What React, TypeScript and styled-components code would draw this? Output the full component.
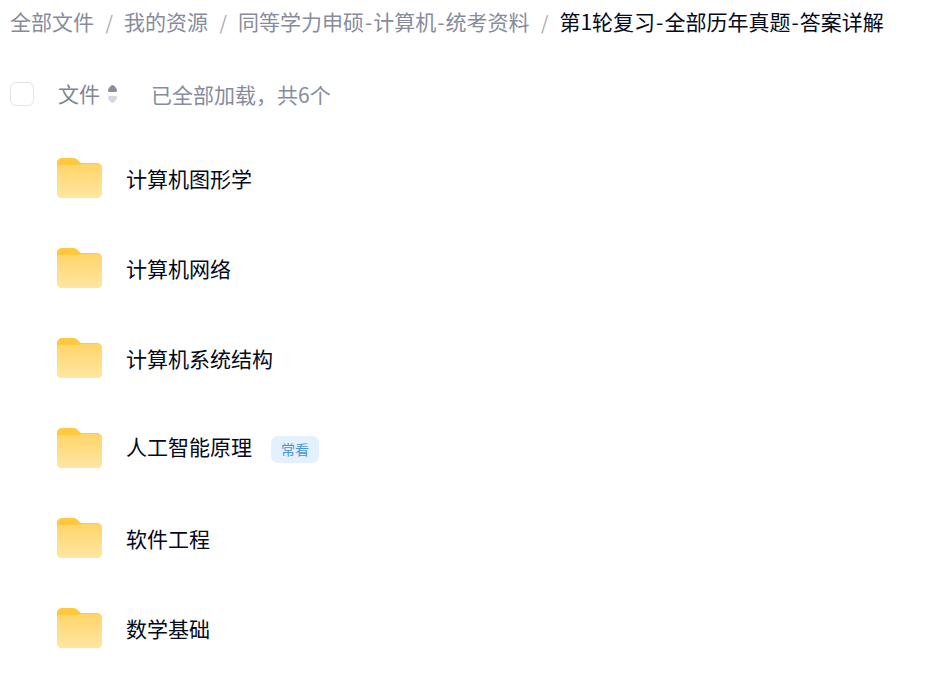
import React from 'react';
import styled, { createGlobalStyle } from 'styled-components';

const GlobalStyle = createGlobalStyle`
  html, body {
    margin: 0;
    padding: 0;
    background: #fff;
    overflow: hidden;
  }
  body {
    font-family: "Noto Sans CJK SC", "Noto Sans", sans-serif;
  }
`;

const Page = styled.div`
  width: 939px;
  height: 673px;
  padding-left: 10px;
  box-sizing: border-box;
  overflow: hidden;
`;

const Breadcrumb = styled.nav`
  display: flex;
  align-items: center;
  height: 42px;
  font-size: 21px;
  white-space: nowrap;
`;

const Crumb = styled.span<{ $current?: boolean }>`
  color: ${(p) => (p.$current ? '#03081a' : '#878c9c')};
`;

// the hyphen sits wider in the reference font
const Dash = styled.span`
  margin: 0 1px;
`;

const Separator = styled.span`
  color: #a5a9b5;
  font-size: 19px;
  margin: 0 11px 0 11.500px;
`;

const HeaderRow = styled.div`
  display: flex;
  align-items: center;
  height: 48px;
  margin-top: 28px;
`;

const Checkbox = styled.div`
  width: 22px;
  height: 22px;
  border: 1px solid #e2e3e8;
  border-radius: 6px;
  background: #fff;
`;

const HeaderLabel = styled.span`
  margin-left: 24px;
  padding-bottom: 2px;
  font-size: 21px;
  color: #818696;
`;

const SortIcon = styled.svg`
  margin-left: 8px;
  width: 9px;
  height: 18px;
`;

const Summary = styled.span`
  margin-left: 34px;
  font-size: 21px;
  color: #878c9c;
`;

const List = styled.ul`
  list-style: none;
  margin: 15px 0 0;
  padding: 0 0 0 47px;
`;

const Row = styled.li`
  display: flex;
  align-items: center;
  height: 90px;
`;

const FolderIcon = styled.svg`
  width: 45px;
  height: 40px;
  flex: none;
`;

const Name = styled.span<{ $tagged?: boolean }>`
  margin-left: 24px;
  padding-bottom: ${(p) => (p.$tagged ? '4px' : '1px')};
  font-size: 21px;
  color: #03081a;
  white-space: nowrap;
`;

const Badge = styled.span`
  margin: 2px 0 0 19px;
  padding-bottom: 1px;
  box-sizing: border-box;
  width: 48px;
  height: 27px;
  border-radius: 7px;
  background: #e3f0fd;
  color: #4a94d0;
  font-size: 14px;
  display: flex;
  align-items: center;
  justify-content: center;
`;

const Folder: React.FC<{ id: string }> = ({ id }) => (
  <FolderIcon viewBox="0 0 45 40">
    <defs>
      <linearGradient id={id} x1="0" y1="0" x2="0" y2="1">
        <stop offset="0" stopColor="#ffd569" />
        <stop offset="1" stopColor="#ffe6a2" />
      </linearGradient>
    </defs>
    <path
      d="M5 0h11.500c1.800 0 3 .7 4.100 1.900L24 5h16c2.800 0 5 2.200 5 5v6H0V5c0-2.800 2.200-5 5-5z"
      fill="#ffc83f"
    />
    <path
      d="M3 7h18c1.500 0 2.500-.3 3.500-1H41c2.200 0 4 1.800 4 4v26c0 2.200-1.800 4-4 4H4c-2.200 0-4-1.800-4-4V10c0-1.700 1.300-3 3-3z"
      fill={`url(#${id})`}
    />
  </FolderIcon>
);

const folders = [
  { name: '计算机图形学' },
  { name: '计算机网络' },
  { name: '计算机系统结构' },
  { name: '人工智能原理', badge: '常看' },
  { name: '软件工程' },
  { name: '数学基础' },
];

const path = ['全部文件', '我的资源', '同等学力申硕-计算机-统考资料'];

const withDashes = (text: string) =>
  text.split('-').map((part, i) => (
    <React.Fragment key={part}>
      {i > 0 && <Dash>-</Dash>}
      {part}
    </React.Fragment>
  ));

export default function App() {
  return (
    <Page>
      <GlobalStyle />
      <Breadcrumb>
        {path.map((item) => (
          <React.Fragment key={item}>
            <Crumb>{withDashes(item)}</Crumb>
            <Separator>/</Separator>
          </React.Fragment>
        ))}
        <Crumb $current>{withDashes('第1轮复习-全部历年真题-答案详解')}</Crumb>
      </Breadcrumb>
      <HeaderRow>
        <Checkbox />
        <HeaderLabel>文件</HeaderLabel>
        <SortIcon viewBox="0 0 9 18">
          <path d="M4.500 0C6 0 9 3.500 9 5.500 9 6.500 8.300 7 7.500 7h-6C.7 7 0 6.500 0 5.500 0 3.500 3 0 4.500 0z" fill="#8a8e9c" />
          <path d="M4.500 18C6 18 9 14.500 9 12.500 9 11.500 8.300 11 7.500 11h-6C.7 11 0 11.500 0 12.500 0 14.500 3 18 4.500 18z" fill="#d6d8df" />
        </SortIcon>
        <Summary>{'已全部加载\uFF0C共6个'}</Summary>
      </HeaderRow>
      <List>
        {folders.map((f, i) => (
          <Row key={f.name}>
            <Folder id={`folder-${i}`} />
            <Name $tagged={Boolean(f.badge)}>{f.name}</Name>
            {f.badge && <Badge>{f.badge}</Badge>}
          </Row>
        ))}
      </List>
    </Page>
  );
}
